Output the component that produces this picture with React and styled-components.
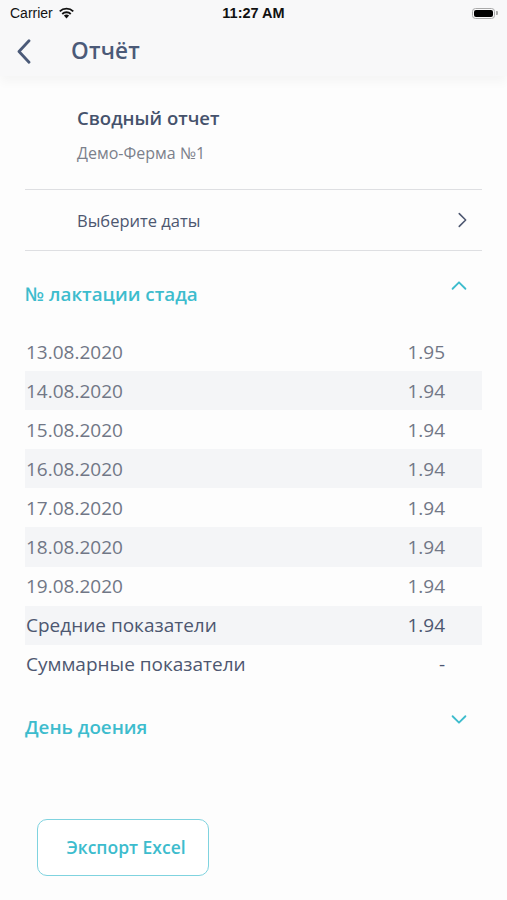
import styled, { createGlobalStyle } from "styled-components";

const GlobalStyle = createGlobalStyle`
  html, body {
    margin: 0;
    padding: 0;
    background: #fdfdfd;
  }
  body {
    font-family: "Open Sans", "Noto Sans", sans-serif;
    -webkit-font-smoothing: antialiased;
  }
`;

const rows = [
  { date: "13.08.2020", value: "1.95" },
  { date: "14.08.2020", value: "1.94" },
  { date: "15.08.2020", value: "1.94" },
  { date: "16.08.2020", value: "1.94" },
  { date: "17.08.2020", value: "1.94" },
  { date: "18.08.2020", value: "1.94" },
  { date: "19.08.2020", value: "1.94" },
];

const Screen = styled.div`
  width: 507px;
  height: 900px;
  display: flex;
  flex-direction: column;
  background: #fdfdfd;
  overflow: hidden;
`;

const TopArea = styled.header`
  background: #f8f8f9;
  box-shadow: 0 6px 10px rgba(0, 0, 0, 0.035);
  position: relative;
  z-index: 1;
`;

const StatusBar = styled.div`
  height: 26px;
  display: grid;
  grid-template-columns: 1fr auto 1fr;
  align-items: center;
  padding: 0 10px;
  font-family: "Liberation Sans", Arial, sans-serif;
  font-size: 14px;
  color: #111;
`;

const Carrier = styled.div`
  display: flex;
  align-items: center;
  gap: 5px;
`;

const Clock = styled.div`
  font-weight: 700;
  font-size: 14.5px;
`;

const Battery = styled.div`
  justify-self: end;
  display: flex;
  align-items: center;
  margin-right: -1px;
`;

const BatteryBody = styled.div`
  width: 23px;
  height: 11px;
  border: 1px solid #aaa;
  border-radius: 3.5px;
  padding: 1px;
  box-sizing: border-box;
  &::after {
    content: "";
    display: block;
    width: 100%;
    height: 100%;
    background: #000;
    border-radius: 2px;
  }
`;

const BatteryTip = styled.div`
  width: 2px;
  height: 4px;
  background: #aaa;
  border-radius: 0 1px 1px 0;
  margin-left: 1px;
`;

const NavBar = styled.div`
  height: 50px;
  display: flex;
  align-items: center;
  padding-left: 17px;
`;

const BackButton = styled.button`
  border: none;
  background: none;
  padding: 0;
  width: 14px;
  display: flex;
  align-items: center;
  color: #4b5a78;
`;

const NavTitle = styled.h1`
  margin: 0 0 0 40px;
  font-size: 22.5px;
  line-height: 30px;
  font-weight: 600;
  color: #4b5a78;
  letter-spacing: 0.2px;
`;

const Content = styled.main`
  padding: 0 25px;
  display: flex;
  flex-direction: column;
`;

const ReportInfo = styled.div`
  padding: 30px 0 25px 52px;
  border-bottom: 1.5px solid #dedfe2;
`;

const ReportTitle = styled.div`
  font-size: 18.5px;
  font-weight: 600;
  color: #45526c;
  line-height: 24px;
`;

const ReportFarm = styled.div`
  margin-top: 12px;
  font-size: 16px;
  color: #7b808b;
  line-height: 22px;
`;

const DatePicker = styled.div`
  height: 60px;
  display: flex;
  align-items: center;
  justify-content: space-between;
  padding: 0 9px 0 52px;
  border-bottom: 1.5px solid #dedfe2;
  font-size: 16.5px;
  color: #4d5770;
`;

const SectionHeader = styled.div`
  display: flex;
  align-items: center;
  justify-content: space-between;
  padding: ${(p) => (p.$open ? "31px 12px 26px 0" : "31px 12px 0 0")};
`;

const SectionTitle = styled.div`
  font-size: 18.8px;
  font-weight: 600;
  color: #3dbccd;
  line-height: 24px;
`;

const ChevronWrap = styled.div`
  color: #3dbccd;
  display: flex;
  margin-top: -16px;
`;

const Table = styled.div`
  display: flex;
  flex-direction: column;
`;

const Row = styled.div`
  height: 39.1px;
  display: flex;
  align-items: center;
  justify-content: space-between;
  padding: 0 37px 0 1px;
  background: ${(p) => (p.$shaded ? "#f4f5f7" : "transparent")};
  font-size: 19px;
  color: ${(p) => (p.$summary ? "#4d5770" : "#717786")};
`;

const Value = styled.span`
  color: ${(p) => (p.$strong ? "#4d5770" : "inherit")};
  font-weight: ${(p) => (p.$strong ? 500 : 400)};
`;

const Footer = styled.div`
  margin-top: 80px;
  padding-left: 12px;
`;

const ExportButton = styled.button`
  width: 172px;
  height: 57px;
  padding: 0 0 0 6px;
  border: 1.5px solid #7fd3df;
  border-radius: 10px;
  background: #fff;
  font-family: "Open Sans", "Noto Sans", sans-serif;
  font-size: 17.5px;
  font-weight: 600;
  color: #3dbccd;
`;

const Chevron = ({ dir = "right", size = 18, color = "currentColor", width = 2 }) => {
  const paths = {
    right: "M9 5 L16 12 L9 19",
    up: "M5 15 L12 8 L19 15",
    down: "M5 9 L12 16 L19 9",
  };
  return (
    <svg width={size} height={size} viewBox="0 0 24 24" fill="none">
      <path d={paths[dir]} stroke={color} strokeWidth={width} strokeLinecap="round" strokeLinejoin="round" />
    </svg>
  );
};

const BackChevron = () => (
  <svg width="14" height="25" viewBox="0 0 14 25" fill="none">
    <path d="M12 1.8 L2 12.5 L12 23.2" stroke="currentColor" strokeWidth="2.8" strokeLinecap="round" strokeLinejoin="round" />
  </svg>
);

const Wifi = () => (
  <svg width="17" height="12" viewBox="0 0 17 12">
    <path d="M8.5 11.5 L5.9 8.6 A3.8 3.8 0 0 1 11.1 8.6 Z" fill="#111" />
    <path d="M3.6 6.3 A7 7 0 0 1 13.4 6.3 L12.1 7.7 A5.1 5.1 0 0 0 4.9 7.7 Z" fill="#111" />
    <path d="M1.1 3.7 A10.6 10.6 0 0 1 15.9 3.7 L14.6 5.1 A8.7 8.7 0 0 0 2.4 5.1 Z" fill="#111" />
  </svg>
);

export default function App() {
  return (
    <Screen>
      <GlobalStyle />
      <TopArea>
        <StatusBar>
          <Carrier>
            Carrier <Wifi />
          </Carrier>
          <Clock>11:27 AM</Clock>
          <Battery>
            <BatteryBody />
            <BatteryTip />
          </Battery>
        </StatusBar>
        <NavBar>
          <BackButton>
            <BackChevron />
          </BackButton>
          <NavTitle>Отчёт</NavTitle>
        </NavBar>
      </TopArea>
      <Content>
        <ReportInfo>
          <ReportTitle>Сводный отчет</ReportTitle>
          <ReportFarm>Демо-Ферма №1</ReportFarm>
        </ReportInfo>
        <DatePicker>
          Выберите даты
          <Chevron dir="right" size={22} color="#4d5770" width={1.7} />
        </DatePicker>
        <SectionHeader $open>
          <SectionTitle>№ лактации стада</SectionTitle>
          <ChevronWrap>
            <Chevron dir="up" size={22} width={2} />
          </ChevronWrap>
        </SectionHeader>
        <Table>
          {rows.map((r, i) => (
            <Row key={r.date} $shaded={i % 2 === 1}>
              <span>{r.date}</span>
              <Value>{r.value}</Value>
            </Row>
          ))}
          <Row $shaded $summary>
            <span>Средние показатели</span>
            <Value $strong>1.94</Value>
          </Row>
          <Row $summary>
            <span>Суммарные показатели</span>
            <Value $strong>-</Value>
          </Row>
        </Table>
        <SectionHeader>
          <SectionTitle>День доения</SectionTitle>
          <ChevronWrap>
            <Chevron dir="down" size={22} width={2} />
          </ChevronWrap>
        </SectionHeader>
        <Footer>
          <ExportButton>Экспорт Excel</ExportButton>
        </Footer>
      </Content>
    </Screen>
  );
}
